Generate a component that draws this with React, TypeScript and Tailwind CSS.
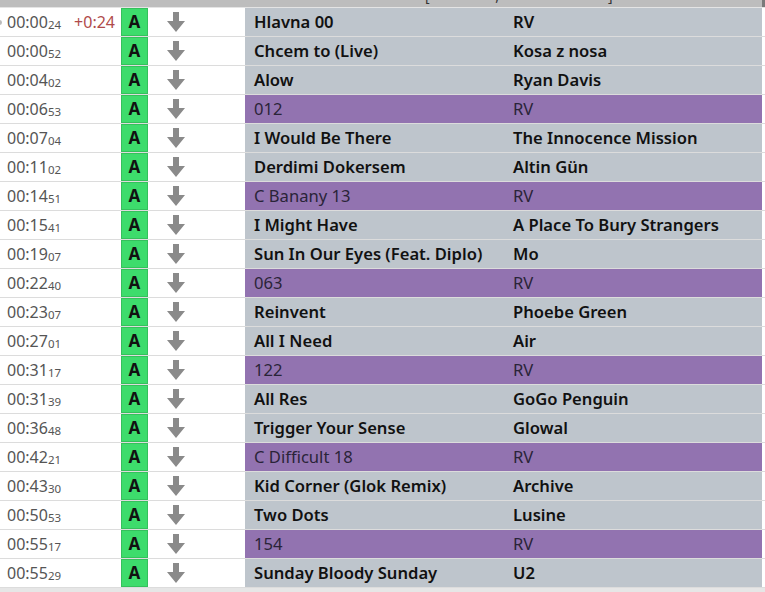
import React from 'react';

interface Row {
  min: string;
  sec: string;
  title: string;
  artist: string;
  marker?: boolean;
  offset?: string;
}

const rows: Row[] = [
  { min: '00:00', sec: '24', title: 'Hlavna 00', artist: 'RV', offset: '+0:24' },
  { min: '00:00', sec: '52', title: 'Chcem to (Live)', artist: 'Kosa z nosa' },
  { min: '00:04', sec: '02', title: 'Alow', artist: 'Ryan Davis' },
  { min: '00:06', sec: '53', title: '012', artist: 'RV', marker: true },
  { min: '00:07', sec: '04', title: 'I Would Be There', artist: 'The Innocence Mission' },
  { min: '00:11', sec: '02', title: 'Derdimi Dokersem', artist: 'Altin Gün' },
  { min: '00:14', sec: '51', title: 'C Banany 13', artist: 'RV', marker: true },
  { min: '00:15', sec: '41', title: 'I Might Have', artist: 'A Place To Bury Strangers' },
  { min: '00:19', sec: '07', title: 'Sun In Our Eyes (Feat. Diplo)', artist: 'Mo' },
  { min: '00:22', sec: '40', title: '063', artist: 'RV', marker: true },
  { min: '00:23', sec: '07', title: 'Reinvent', artist: 'Phoebe Green' },
  { min: '00:27', sec: '01', title: 'All I Need', artist: 'Air' },
  { min: '00:31', sec: '17', title: '122', artist: 'RV', marker: true },
  { min: '00:31', sec: '39', title: 'All Res', artist: 'GoGo Penguin' },
  { min: '00:36', sec: '48', title: 'Trigger Your Sense', artist: 'Glowal' },
  { min: '00:42', sec: '21', title: 'C Difficult 18', artist: 'RV', marker: true },
  { min: '00:43', sec: '30', title: 'Kid Corner (Glok Remix)', artist: 'Archive' },
  { min: '00:50', sec: '53', title: 'Two Dots', artist: 'Lusine' },
  { min: '00:55', sec: '17', title: '154', artist: 'RV', marker: true },
  { min: '00:55', sec: '29', title: 'Sunday Bloody Sunday', artist: 'U2' },
];

function DownArrow() {
  return (
    <svg width="18" height="20" viewBox="0 0 18 20" className="block">
      <path d="M6 0 H12 V9 H18 L9 20 L0 9 H6 Z" fill="#8a8a8a" />
    </svg>
  );
}

function PlaylistRow({ row, first }: { row: Row; first: boolean }) {
  return (
    <div className="flex h-[29px] border-b border-[#dcdcdc] bg-white">
      <div className="relative flex w-[121px] items-center pl-[7px] text-[#555]">
        {first && <span className="absolute left-[-3px] top-[12px] h-[5px] w-[5px] rounded-full bg-[#bbb]" />}
        <span className="text-[16px] leading-none">{row.min}</span>
        <span className="mt-[5px] text-[11.5px] leading-none">{row.sec}</span>
        {row.offset && (
          <span className="ml-auto pr-[6px] text-[16px] leading-none text-[#b04a4a]">{row.offset}</span>
        )}
      </div>
      <div className="flex w-[27px] items-center justify-center border border-[#35c05c] bg-[#3ddc6c] text-[17px] font-bold text-[#111]">
        A
      </div>
      <div className="flex w-[97px] items-center pl-[19px] pb-[1px]">
        <DownArrow />
      </div>
      <div
        className={`flex w-[517px] items-center text-[16.6px] leading-none ${
          row.marker ? 'bg-[#9273b0] font-normal text-[#2a2438]' : 'bg-[#bec5cc] font-semibold text-[#111]'
        }`}
      >
        <span className="w-[268px] pl-[9px] whitespace-nowrap">{row.title}</span>
        <span className="whitespace-nowrap">{row.artist}</span>
      </div>
      <div className="flex-1" />
    </div>
  );
}

export default function App() {
  return (
    <div
      className="h-[592px] w-[765px] overflow-hidden bg-white"
      style={{ fontFamily: '"Noto Sans", "Open Sans", sans-serif' }}
    >
      <div className="flex h-[8px] overflow-hidden border-b border-[#e4e4e4] bg-[#bdbdbd]">
        <div className="flex-1 overflow-hidden">
          <div className="mt-[-12px] pl-[425px] text-[14px] leading-[16px] text-[#333] whitespace-pre">
            {'[                  ,                              ]'}
          </div>
        </div>
        <div className="w-[3px] bg-[#7a7a7a]" />
      </div>
      {rows.map((row, i) => (
        <PlaylistRow key={i} row={row} first={i === 0} />
      ))}
      <div className="h-[10px] bg-[#e6e6e6]" />
    </div>
  );
}
